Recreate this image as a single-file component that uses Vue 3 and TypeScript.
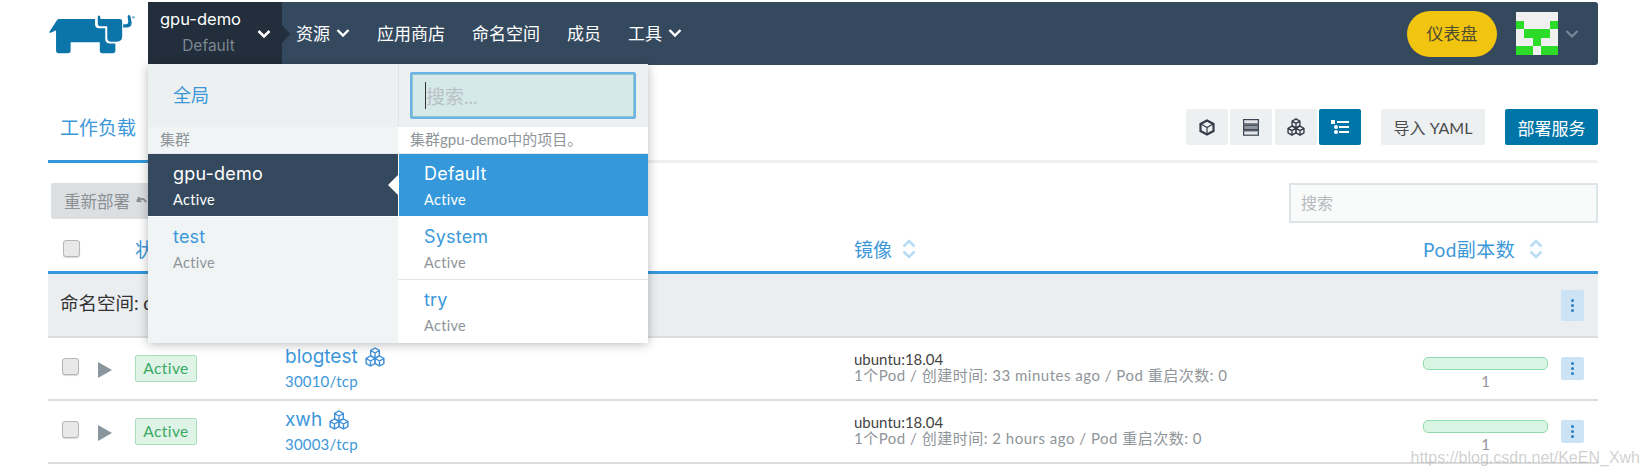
<script setup lang="ts">
interface Row {
  name: string;
  port: string;
  image: string;
  detail: string;
}

const navItems = [
  { label: '资源', arrow: true },
  { label: '应用商店', arrow: false },
  { label: '命名空间', arrow: false },
  { label: '成员', arrow: false },
  { label: '工具', arrow: true },
];

const avatar = [0, 0, 0, 0, 0, 1, 0, 0, 0, 1, 0, 1, 1, 1, 0, 0, 0, 1, 0, 0, 1, 1, 0, 1, 1];

const clusters = [
  { name: 'gpu-demo', active: true },
  { name: 'test', active: false },
];

const projects = [
  { name: 'Default', active: true },
  { name: 'System', active: false },
  { name: 'try', active: false },
];

const rows: Row[] = [
  {
    name: 'blogtest',
    port: '30010/tcp',
    image: 'ubuntu:18.04',
    detail: '1个Pod / 创建时间: 33 minutes ago / Pod 重启次数: 0',
  },
  {
    name: 'xwh',
    port: '30003/tcp',
    image: 'ubuntu:18.04',
    detail: '1个Pod / 创建时间: 2 hours ago / Pod 重启次数: 0',
  },
];

// one small cube: pointy-top hexagon with a Y inside
function cube(cx: number, cy: number, r: number): string {
  const dx = r * 0.87;
  const dy = r * 0.5;
  return (
    `M${cx} ${cy - r}L${cx + dx} ${cy - dy}V${cy + dy}L${cx} ${cy + r}L${cx - dx} ${cy + dy}V${cy - dy}Z` +
    `M${cx - dx} ${cy - dy}L${cx} ${cy}L${cx + dx} ${cy - dy}M${cx} ${cy}V${cy + r}`
  );
}

const cubes = cube(10, 6, 5) + cube(5.5, 14, 5) + cube(14.5, 14, 5);
</script>

<template>
  <div class="page">
    <header class="top">
      <div class="logo">
        <svg width="87" height="39" viewBox="57 45 255 115" fill="#0b75aa">
          <path d="M57 95 80 60Q82 57 86 57H192V72Q192 84 204 84H222V116Q222 129 236 129H252V150Q252 158 244 158H214Q206 158 206 150V125H120V150Q120 158 112 158H85Q77 158 77 150V90L60 98Z" />
          <path d="M200 50Q200 46 205 47 208 48 208 57H265Q272 57 272 64V108Q272 124 256 124H240Q228 124 228 112V78H208Q200 78 200 70Z" />
          <path d="M275 72H285Q290 72 290 65L288 50Q288 45 292 45 296 45 297 52L300 68Q300 82 285 82H275Z" />
          <circle cx="305" cy="52" r="4" fill="#7fb5d2" />
        </svg>
      </div>
      <nav class="nav">
        <div class="switcher">
          <div class="switcher-text">
            <div class="cluster-name">gpu-demo</div>
            <div class="project-name">Default</div>
          </div>
          <svg class="chev" width="14" height="10" viewBox="0 0 14 10">
            <path d="M1.5 2 7 7.5 12.5 2" fill="none" stroke="#fff" stroke-width="2.6" />
          </svg>
          <span class="switcher-tip" />

          <div class="menu">
            <div class="menu-col menu-left">
              <div class="global-row">全局</div>
              <div class="menu-label">集群</div>
              <div
                v-for="c in clusters"
                :key="c.name"
                class="menu-item"
                :class="{ 'is-dark': c.active }"
              >
                <div class="item-title">{{ c.name }}</div>
                <div class="item-sub">Active</div>
                <span v-if="c.active" class="item-tip" />
              </div>
            </div>
            <div class="menu-col menu-right">
              <div class="search-row">
                <div class="menu-search">
                  <span class="caret" />
                  <span>搜索...</span>
                </div>
              </div>
              <div class="menu-label">集群gpu-demo中的项目。</div>
              <div
                v-for="p in projects"
                :key="p.name"
                class="menu-item"
                :class="{ 'is-blue': p.active }"
              >
                <div class="item-title">{{ p.name }}</div>
                <div class="item-sub">Active</div>
              </div>
            </div>
          </div>
        </div>

        <div class="nav-links">
          <div v-for="item in navItems" :key="item.label" class="nav-link">
            <span>{{ item.label }}</span>
            <svg v-if="item.arrow" width="14" height="10" viewBox="0 0 14 10">
              <path d="M1.5 2 7 7.5 12.5 2" fill="none" stroke="#fff" stroke-width="2.4" />
            </svg>
          </div>
        </div>

        <div class="nav-right">
          <div class="dashboard">仪表盘</div>
          <div class="avatar">
            <i v-for="(cell, i) in avatar" :key="i" :class="{ on: cell === 1 }" />
          </div>
          <svg width="14" height="10" viewBox="0 0 14 10">
            <path d="M1.5 2 7 7.5 12.5 2" fill="none" stroke="#77889a" stroke-width="2.2" />
          </svg>
        </div>
      </nav>
    </header>

    <section class="toolbar">
      <div class="tab">工作负载</div>
      <div class="tools">
        <div class="view-group">
          <button class="icon-btn">
            <svg width="16" height="17" viewBox="0 0 16 17" fill="none" stroke="#333c48" stroke-width="2.2">
              <path d="M8 1.5 14.5 5v7L8 15.5 1.5 12V5z" />
              <path stroke-width="1.2" d="M2 5l6 3.5L14 5M8 8.5V15" />
            </svg>
          </button>
          <button class="icon-btn">
            <svg width="16" height="17" viewBox="0 0 16 17" stroke="#3b4450" stroke-width="1.2">
              <rect x="0.6" y="0.6" width="14.8" height="4.4" fill="#e4e7e9" />
              <rect x="0.6" y="6.2" width="14.8" height="4.4" fill="#8f979e" />
              <rect x="0.6" y="11.8" width="14.8" height="4.4" fill="#e4e7e9" />
            </svg>
          </button>
          <button class="icon-btn icon-gap">
            <svg width="18" height="18" viewBox="0 0 20 20" fill="none" stroke="#333c48" stroke-width="1.5">
              <path :d="cubes" />
            </svg>
          </button>
          <button class="icon-btn is-on">
            <svg width="18" height="14" viewBox="0 0 18 14" fill="#fff">
              <rect x="0" y="0" width="4" height="4" />
              <rect x="6" y="1" width="12" height="2" />
              <circle cx="5" cy="7" r="2" />
              <rect x="8" y="6" width="10" height="2" />
              <circle cx="5" cy="12" r="2" />
              <rect x="8" y="11" width="10" height="2" />
            </svg>
          </button>
        </div>
        <button class="btn-plain">导入 YAML</button>
        <button class="btn-deploy">部署服务</button>
      </div>
    </section>

    <section class="bulk">
      <button class="bulk-btn">
        重新部署
        <svg width="12" height="12" viewBox="0 0 12 12" fill="none" stroke="#8a9094" stroke-width="2">
          <path d="M3 2 1.5 6l4 .5M2 6c2-3 6-3 8 1" />
        </svg>
      </button>
      <div class="list-search">搜索</div>
    </section>

    <div class="grid head">
      <div class="cell-check"><span class="check" /></div>
      <div />
      <div class="th">状态</div>
      <div class="th">名称</div>
      <div class="th">
        镜像
        <svg class="sort" width="14" height="20" viewBox="0 0 14 20">
          <path d="M1.5 7.5 7 2l5.5 5.5M1.5 12.5 7 18l5.5-5.5" fill="none" stroke="#b9dcf5" stroke-width="2.6" />
        </svg>
      </div>
      <div class="th th-wide">
        Pod副本数
        <svg class="sort" width="14" height="20" viewBox="0 0 14 20">
          <path d="M1.5 7.5 7 2l5.5 5.5M1.5 12.5 7 18l5.5-5.5" fill="none" stroke="#b9dcf5" stroke-width="2.6" />
        </svg>
      </div>
    </div>

    <div class="group">
      <span class="group-name">命名空间: default</span>
      <button class="more more-tall"><span /><span /><span /></button>
    </div>

    <div v-for="row in rows" :key="row.name" class="grid row">
      <div class="cell-check"><span class="check" /></div>
      <div><span class="play" /></div>
      <div><span class="badge">Active</span></div>
      <div class="name-cell">
        <div class="row-name">
          {{ row.name }}
          <svg width="20" height="20" viewBox="0 0 20 20" fill="none" stroke="#3d8fd8" stroke-width="1.4">
            <path :d="cubes" />
          </svg>
        </div>
        <div class="row-port">{{ row.port }}</div>
      </div>
      <div class="image-cell">
        <div class="row-image">{{ row.image }}</div>
        <div class="row-detail">{{ row.detail }}</div>
      </div>
      <div class="scale-cell">
        <div class="scale-bar" />
        <div class="scale-num">1</div>
      </div>
      <div class="more-cell">
        <button class="more"><span /><span /><span /></button>
      </div>
    </div>

    <div class="watermark">https://blog.csdn.net/KeEN_Xwh</div>
  </div>
</template>

<style>
html,
body {
  margin: 0;
  background: #fff;
}
</style>

<style scoped>
.page {
  position: relative;
  box-sizing: border-box;
  width: 1647px;
  height: 476px;
  overflow: hidden;
  padding: 2px 49px 0 48px;
  font-family: Lato, "Noto Sans CJK SC", sans-serif;
  color: #4b4b4b;
}

button {
  font-family: inherit;
  border: 0;
  padding: 0;
}

.top {
  display: flex;
  height: 63px;
}

.logo {
  width: 100px;
  padding: 13px 0 0 1px;
  box-sizing: border-box;
  flex: none;
}

.nav {
  flex: 1;
  display: flex;
  align-items: stretch;
  background: #34495e;
  border-radius: 0 3px 3px 0;
  position: relative;
  z-index: 5;
}

.switcher {
  position: relative;
  width: 134px;
  flex: none;
  display: flex;
  align-items: center;
  background: #222e3c;
}

.switcher-text {
  padding-left: 12px;
  width: 97px;
  flex: none;
}

.cluster-name {
  color: #fff;
  font-family: Inter, sans-serif;
  font-size: 16.5px;
  line-height: 20px;
}

.project-name {
  color: #7a8690;
  font-family: Inter, sans-serif;
  font-size: 15.5px;
  line-height: 24px;
  margin-top: 5px;
  text-align: center;
}

.chev {
  margin-left: 0;
}

.switcher-tip {
  position: absolute;
  left: 100%;
  top: 23px;
  border-left: 8px solid #222e3c;
  border-top: 9px solid transparent;
  border-bottom: 9px solid transparent;
}

.menu {
  position: absolute;
  left: 0;
  top: 62px;
  width: 500px;
  height: 278px;
  display: grid;
  grid-template-columns: 250px 250px;
  box-shadow: 0 2px 10px rgba(0, 0, 0, 0.28);
  z-index: 10;
}

.menu-left {
  background: #f1f4f5;
}

.menu-right {
  background: #fff;
}

.global-row {
  height: 63px;
  box-sizing: border-box;
  padding: 18px 0 0 25px;
  background: #ecf0f1;
  color: #3d98da;
  font-size: 18px;
  line-height: 26px;
}

.search-row {
  height: 63px;
  box-sizing: border-box;
  padding: 8px 12px 8px 11px;
  background: #ecf0f1;
  border-left: 1px solid #dfe3e5;
}

.menu-search {
  height: 47px;
  box-sizing: border-box;
  display: flex;
  align-items: center;
  padding-left: 13px;
  border: 2px solid #6bb3e6;
  outline: 1px solid #8fc8c8;
  outline-offset: -3px;
  background: #d5e8ea;
  color: #b8c2c4;
  font-size: 19px;
  border-radius: 2px;
}

.caret {
  width: 1px;
  height: 27px;
  background: #333;
}

.menu-label {
  height: 27px;
  box-sizing: border-box;
  padding-left: 12px;
  font-size: 15px;
  line-height: 25px;
  color: #8f9599;
  border-bottom: 1px solid #e6e9ea;
}

.menu-item {
  position: relative;
  height: 62px;
  box-sizing: border-box;
  padding: 10px 0 0 25px;
  border-bottom: 1px solid transparent;
}

.menu-right .menu-item {
  height: 63px;
  border-left: 1px solid #fff;
  border-bottom-color: #e4e4e4;
}

.menu-right .menu-item:last-child {
  border-bottom: 0;
}

.menu-item.is-dark,
.menu-item.is-blue {
  height: 63px;
  border-bottom: 1px solid #fff;
}

.is-dark {
  background: #34495e;
}

.is-blue {
  background: #3498db;
}

.item-title {
  font-family: Inter, sans-serif;
  font-size: 18px;
  line-height: 20px;
  letter-spacing: 0.2px;
  color: #3d98da;
}

.item-sub {
  font-size: 14.5px;
  line-height: 20px;
  margin-top: 6px;
  letter-spacing: 0.3px;
  color: #8f9599;
}

.is-dark .item-title,
.is-dark .item-sub,
.is-blue .item-title,
.is-blue .item-sub {
  color: #fff;
}

.item-tip {
  position: absolute;
  right: 0;
  top: 21px;
  border-right: 10px solid #fff;
  border-top: 10px solid transparent;
  border-bottom: 10px solid transparent;
}

.nav-links {
  display: flex;
  align-items: center;
  margin: -2px 0 0 14px;
  gap: 27px;
}

.nav-link {
  display: flex;
  align-items: center;
  gap: 6px;
  color: #fff;
  font-size: 17px;
}

.nav-right {
  margin-left: auto;
  display: flex;
  align-items: center;
  padding-right: 19px;
}

.dashboard {
  width: 90px;
  height: 46px;
  line-height: 46px;
  border-radius: 23px;
  background: #f1c40f;
  color: #4d4a33;
  text-align: center;
  font-size: 17px;
}

.avatar {
  display: grid;
  grid-template-columns: repeat(5, 1fr);
  grid-template-rows: repeat(5, 1fr);
  width: 42px;
  height: 43px;
  margin: 0 7px 0 19px;
  background: #f0f0f0;
}

.avatar .on {
  background: #2ddc28;
}

.toolbar {
  display: flex;
  justify-content: space-between;
  align-items: flex-start;
  height: 98px;
  box-sizing: border-box;
  border-bottom: 3px solid #ecf0f1;
}

.tab {
  width: 110px;
  box-sizing: border-box;
  height: 98px;
  padding: 49px 0 0 12px;
  font-size: 19px;
  line-height: 28px;
  color: #3d98da;
  border-bottom: 3px solid #3498db;
}

.tools {
  display: flex;
  margin-top: 44px;
}

.view-group {
  display: flex;
  gap: 2px;
  margin-right: 20px;
}

.icon-btn {
  width: 42px;
  height: 36px;
  display: flex;
  align-items: center;
  justify-content: center;
  background: #ecf0f1;
  border-radius: 2px;
}

.icon-gap {
  margin-left: 1px;
}

.icon-btn.is-on {
  background: #0075a8;
}

.btn-plain {
  width: 104px;
  height: 36px;
  margin-right: 20px;
  background: #ecf0f1;
  border-radius: 2px;
  color: #4b4b4b;
  font-size: 16px;
}

.btn-deploy {
  width: 93px;
  height: 36px;
  background: #0075a8;
  border-radius: 2px;
  color: #fff;
  font-size: 17px;
}

.bulk {
  display: flex;
  justify-content: space-between;
  align-items: flex-start;
  height: 60px;
  padding-top: 20px;
  box-sizing: border-box;
}

.bulk-btn {
  display: flex;
  align-items: center;
  gap: 6px;
  margin-left: 3px;
  width: 140px;
  height: 36px;
  padding-left: 13px;
  background: #dcdfe2;
  border-radius: 2px;
  color: #8a9094;
  font-size: 16.5px;
}

.list-search {
  width: 309px;
  height: 40px;
  box-sizing: border-box;
  border: 2px solid #dce5e8;
  background: #f9fbfb;
  padding-left: 10px;
  line-height: 36px;
  font-size: 16px;
  color: #b5b9bc;
}

.grid {
  display: grid;
  grid-template-columns: 50px 37px 150px 569px 569px 138px 37px;
}

.head {
  height: 51px;
  align-items: center;
  padding-top: 3px;
  border-bottom: 3px solid #3498db;
  box-sizing: border-box;
}

.cell-check {
  padding-left: 14px;
}

.head .cell-check {
  padding-left: 15px;
  margin-top: -1px;
}

.check {
  display: block;
  width: 17px;
  height: 17px;
  box-sizing: border-box;
  border: 1px solid #b6b6b6;
  border-radius: 3px;
  background: #e8e8e8;
  box-shadow: 0 1px 1px rgba(0, 0, 0, 0.15);
}

.row .check {
  margin-top: -4px;
}

.th {
  display: flex;
  align-items: center;
  gap: 10px;
  font-size: 19px;
  color: #3d98da;
  white-space: nowrap;
}

.th-wide {
  letter-spacing: 0.5px;
  gap: 14px;
}

.group {
  height: 64px;
  box-sizing: border-box;
  display: flex;
  align-items: center;
  justify-content: space-between;
  padding: 0 14px 0 12px;
  background: #ebeef0;
  border-bottom: 2px solid #ddd;
  font-size: 18.5px;
  color: #333;
}

.group-name {
  margin-top: -6px;
}

.more {
  display: flex;
  flex-direction: column;
  align-items: center;
  justify-content: center;
  gap: 2px;
  width: 23px;
  height: 23px;
  background: #cce3f6;
  border-radius: 2px;
}

.more-tall {
  height: 31px;
}

.more span {
  width: 3px;
  height: 3px;
  border-radius: 50%;
  background: #2d7fc1;
}

.row {
  height: 63px;
  box-sizing: border-box;
  align-items: center;
  border-bottom: 2px solid #ddd;
}

.play {
  display: block;
  border-left: 14px solid #89969e;
  border-top: 8px solid transparent;
  border-bottom: 8px solid transparent;
  width: 0;
  margin-top: 2px;
}

.badge {
  display: inline-block;
  box-sizing: border-box;
  width: 62px;
  height: 27px;
  line-height: 25px;
  text-align: center;
  border: 1px solid #a9dfbd;
  border-radius: 2px;
  background: #dff3e6;
  color: #39a965;
  font-size: 15.5px;
  letter-spacing: 0.4px;
}

.name-cell {
  margin-top: -2px;
}

.row-name {
  display: flex;
  align-items: center;
  gap: 7px;
  font-family: Inter, sans-serif;
  font-size: 19px;
  line-height: 24px;
  color: #3d98da;
}

.row-port {
  font-size: 15px;
  line-height: 20px;
  margin-top: 2px;
  letter-spacing: 0.2px;
  color: #3d98da;
}

.image-cell {
  margin-top: -3px;
}

.row-image {
  font-size: 15px;
  line-height: 16px;
  color: #444;
}

.row-detail {
  font-size: 15px;
  line-height: 16px;
  letter-spacing: 0.5px;
  color: #8f9599;
}

.scale-cell {
  text-align: center;
  width: 125px;
  padding-top: 10px;
}

.scale-bar {
  height: 13px;
  box-sizing: border-box;
  border: 1px solid #8fdcae;
  border-radius: 5px;
  background: #d8f5e4;
}

.scale-num {
  color: #8f9599;
  font-size: 15px;
  line-height: 20px;
  margin-top: 1px;
}

.more-cell {
  display: flex;
}

.watermark {
  position: absolute;
  right: 7px;
  bottom: 9px;
  font-family: "Liberation Sans", sans-serif;
  font-size: 16px;
  color: rgba(150, 150, 150, 0.45);
  pointer-events: none;
}
</style>
